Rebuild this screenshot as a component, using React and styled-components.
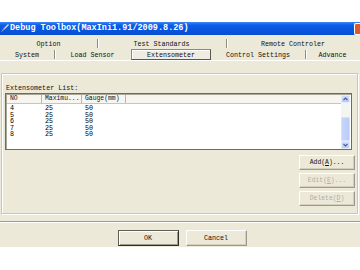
import React from 'react';
import styled, { createGlobalStyle } from 'styled-components';

const Global = createGlobalStyle`
  html, body { margin: 0; padding: 0; background: #ffffff; }
  body { font-family: "Liberation Mono", "DejaVu Sans Mono", monospace; }
`;

const rows = [
  { no: 4, max: 25, gauge: 50 },
  { no: 5, max: 25, gauge: 50 },
  { no: 6, max: 25, gauge: 50 },
  { no: 7, max: 25, gauge: 50 },
  { no: 8, max: 25, gauge: 50 },
];

const topTabs = [
  { label: 'Option', w: 97 },
  { label: 'Test Standards', w: 129 },
  { label: 'Remote Controler', w: 134 },
];

const bottomTabs = [
  { label: 'System', w: 54 },
  { label: 'Load Sensor', w: 77 },
  { label: 'Extensometer', w: 80, active: true },
  { label: 'Control Settings', w: 94 },
  { label: 'Advance', w: 55 },
];

const App = () => {
  return (
    <>
      <Global />
      <Page>
        <Window>
          <TitleBar>
            <TitleIcon viewBox="0 0 8 9">
              <path d="M0 8 L3 4 L7 0 L8 1 L4 5 Z" fill="#d8d8d8" />
              <path d="M0 8 L3 4 L4 5 Z" fill="#8090b0" />
            </TitleIcon>
            <TitleText>Debug Toolbox(MaxIni1.91/2009.8.26)</TitleText>
            <CloseBtn />
          </TitleBar>

          <Tabs>
            <TabRow>
              {topTabs.map((t, i) => (
                <Tab key={t.label} $w={t.w} $sep={i > 0}>{t.label}</Tab>
              ))}
            </TabRow>
            <TabRow>
              {bottomTabs.map((t, i) => (
                <Tab key={t.label} $w={t.w} $sep={i > 0 && !t.active && !bottomTabs[i - 1].active} $active={t.active}>
                  {t.label}
                </Tab>
              ))}
            </TabRow>
          </Tabs>

          <TabPage>
            <Frame>
              <GroupLabel>Extensometer List:</GroupLabel>
              <List>
                <ListBody>
                  <Header>
                    <HeadCell $w={35}>NO</HeadCell>
                    <HeadCell $w={40}>Maximu...</HeadCell>
                    <HeadCell $w={44}>Gauge(mm)</HeadCell>
                    <HeadFill />
                  </Header>
                  <Rows>
                    {rows.map((r) => (
                      <Row key={r.no}>
                        <Cell $w={35}>{r.no}</Cell>
                        <Cell $w={40}>{r.max}</Cell>
                        <Cell $w={44}>{r.gauge}</Cell>
                      </Row>
                    ))}
                  </Rows>
                </ListBody>
                <ScrollBar>
                  <Arrow>
                    <svg width="5" height="4" viewBox="0 0 5 4">
                      <path d="M0.5 3 L2.5 1 L4.5 3" stroke="#4d6185" strokeWidth="1.2" fill="none" />
                    </svg>
                  </Arrow>
                  <Track>
                    <Thumb />
                  </Track>
                  <Arrow>
                    <svg width="5" height="4" viewBox="0 0 5 4">
                      <path d="M0.5 1 L2.5 3 L4.5 1" stroke="#4d6185" strokeWidth="1.2" fill="none" />
                    </svg>
                  </Arrow>
                </ScrollBar>
              </List>
              <SideButtons>
                <SideBtn>Add(<u>A</u>)...</SideBtn>
                <SideBtn $disabled>Edit(<u>E</u>)...</SideBtn>
                <SideBtn $disabled>Delete(<u>D</u>)</SideBtn>
              </SideButtons>
            </Frame>
          </TabPage>

          <Footer>
            <DlgBtn $default>OK</DlgBtn>
            <DlgBtn>Cancel</DlgBtn>
          </Footer>
        </Window>
      </Page>
    </>
  );
};

export default App;

const Page = styled.div`
  width: 360px;
  height: 270px;
  padding-top: 22px;
  box-sizing: border-box;
  background: #fff;
  overflow: hidden;
`;

const Window = styled.div`
  width: 360px;
  height: 225px;
  background: #ece9d8;
  overflow: hidden;
`;

const TitleBar = styled.div`
  height: 13px;
  display: flex;
  align-items: center;
  background: linear-gradient(#3d86f5 0%, #0d5ce6 25%, #0653de 70%, #0a4fcf 100%);
`;

const TitleIcon = styled.svg`
  width: 8px;
  height: 9px;
  margin-left: 1px;
  flex-shrink: 0;
`;

const TitleText = styled.div`
  margin-left: 1px;
  font-family: "Liberation Mono", monospace;
  font-weight: 700;
  font-size: 8.5px;
  line-height: 13px;
  color: #ffffff;
  white-space: nowrap;
  flex: 1;
`;

const CloseBtn = styled.div`
  width: 5px;
  height: 10px;
  background: #db5a32;
  border: 1px solid #fff;
  border-right: none;
  border-radius: 2px 0 0 2px;
`;

const Tabs = styled.div`
  margin-top: 3px;
`;

const TabRow = styled.div`
  display: flex;
  height: 11px;
`;

const Tab = styled.div`
  width: ${(p) => p.$w}px;
  box-sizing: border-box;
  display: flex;
  align-items: center;
  justify-content: center;
  font-size: 6.7px;
  color: #111;
  white-space: nowrap;
  position: relative;
  border: 1px solid transparent;
  ${(p) =>
    p.$active &&
    `
    border-color: #8c8a7e #5a5950 #5a5950 #8c8a7e;
    box-shadow: inset 1px 1px 0 #ffffff;
    background: #efede2;
  `}
  ${(p) =>
    p.$sep &&
    `
    &::before {
      content: '';
      position: absolute;
      left: -1px;
      top: 0;
      height: 9px;
      width: 1px;
      background: #8f8d82;
      box-shadow: 1px 0 0 #ffffff;
    }
  `}
`;

const TabPage = styled.div`
  height: 162px;
  border-top: 1px solid #ffffff;
  box-sizing: border-box;
  padding-top: 12px;
  border-bottom: 1px solid #9d9b8f;
  box-shadow: 0 1px 0 #ffffff;
`;

const Frame = styled.div`
  margin: 0 2px 0 1px;
  height: 141px;
  box-sizing: border-box;
  border: 1px solid #c9c6b6;
  box-shadow: inset 1px 1px 0 #ffffff, 1px 1px 0 #ffffff;
  padding: 10px 4px 0 3px;
  display: flex;
  flex-direction: column;
`;

const GroupLabel = styled.div`
  font-size: 6.7px;
  line-height: 8px;
  height: 8px;
  color: #111;
  margin-left: 1px;
`;

const List = styled.div`
  margin-top: 1px;
  width: 347px;
  height: 57px;
  box-sizing: border-box;
  border: 1px solid #6c6b62;
  box-shadow: inset 1px 1px 0 #a8a79c;
  background: #ffffff;
  display: flex;
  padding: 1px 0 0 1px;
`;

const ListBody = styled.div`
  flex: 1;
  display: flex;
  flex-direction: column;
`;

const Header = styled.div`
  display: flex;
  height: 8px;
  background: #f6f5ef;
  border-bottom: 1px solid #c8c6b8;
`;

const HeadCell = styled.div`
  width: ${(p) => p.$w}px;
  box-sizing: border-box;
  font-size: 6.4px;
  line-height: 8px;
  padding-left: 3px;
  color: #111;
  border-right: 1px solid #b9b7aa;
  white-space: nowrap;
  overflow: hidden;
`;

const HeadFill = styled.div`
  flex: 1;
`;

const Rows = styled.div`
  padding-top: 1px;
`;

const Row = styled.div`
  display: flex;
  height: 6.6px;
`;

const Cell = styled.div`
  width: ${(p) => p.$w}px;
  box-sizing: border-box;
  padding-left: 3px;
  font-size: 6.7px;
  line-height: 6.6px;
  color: #000;
`;

const ScrollBar = styled.div`
  width: 9px;
  display: flex;
  flex-direction: column;
  background: #f4f4f0;
  margin-right: 1px;
`;

const Arrow = styled.div`
  height: 8px;
  background: linear-gradient(#cfdcfd, #b7cbf9);
  border: 1px solid #e3ebfe;
  box-sizing: border-box;
  border-radius: 1px;
  display: flex;
  align-items: center;
  justify-content: center;
`;

const Track = styled.div`
  flex: 1;
  display: flex;
  flex-direction: column;
  justify-content: flex-end;
  padding-top: 14px;
`;

const Thumb = styled.div`
  flex: 1;
  background: linear-gradient(90deg, #c6d6fc, #b8cbf8);
  border: 1px solid #d6e1fd;
  border-radius: 1px;
`;

const SideButtons = styled.div`
  margin-top: 5px;
  align-self: flex-end;
  margin-right: -2px;
  display: flex;
  flex-direction: column;
  gap: 3px;
`;

const SideBtn = styled.div`
  width: 56px;
  height: 15px;
  box-sizing: border-box;
  display: flex;
  align-items: center;
  justify-content: center;
  font-size: 6.4px;
  white-space: nowrap;
  color: ${(p) => (p.$disabled ? '#b1ae9f' : '#111')};
  border: 1px solid;
  border-color: #ffffff #9c9a8e #9c9a8e #ffffff;
  box-shadow: inset -1px -1px 0 #d2cfbf;
  u { text-decoration: underline; }
`;

const Footer = styled.div`
  display: flex;
  justify-content: center;
  gap: 7px;
  padding-left: 4px;
  padding-top: 8px;
`;

const DlgBtn = styled.div`
  width: 61px;
  height: 16px;
  box-sizing: border-box;
  display: flex;
  align-items: center;
  justify-content: center;
  font-size: 6.7px;
  color: #111;
  border: 1px solid;
  border-color: ${(p) =>
    p.$default ? '#5f5e56 #2f2f2a #2f2f2a #5f5e56' : '#ffffff #9c9a8e #9c9a8e #ffffff'};
  box-shadow: ${(p) =>
    p.$default ? 'inset 1px 1px 0 #ffffff, inset -1px -1px 0 #9c9a8e' : 'inset -1px -1px 0 #d2cfbf'};
`;
